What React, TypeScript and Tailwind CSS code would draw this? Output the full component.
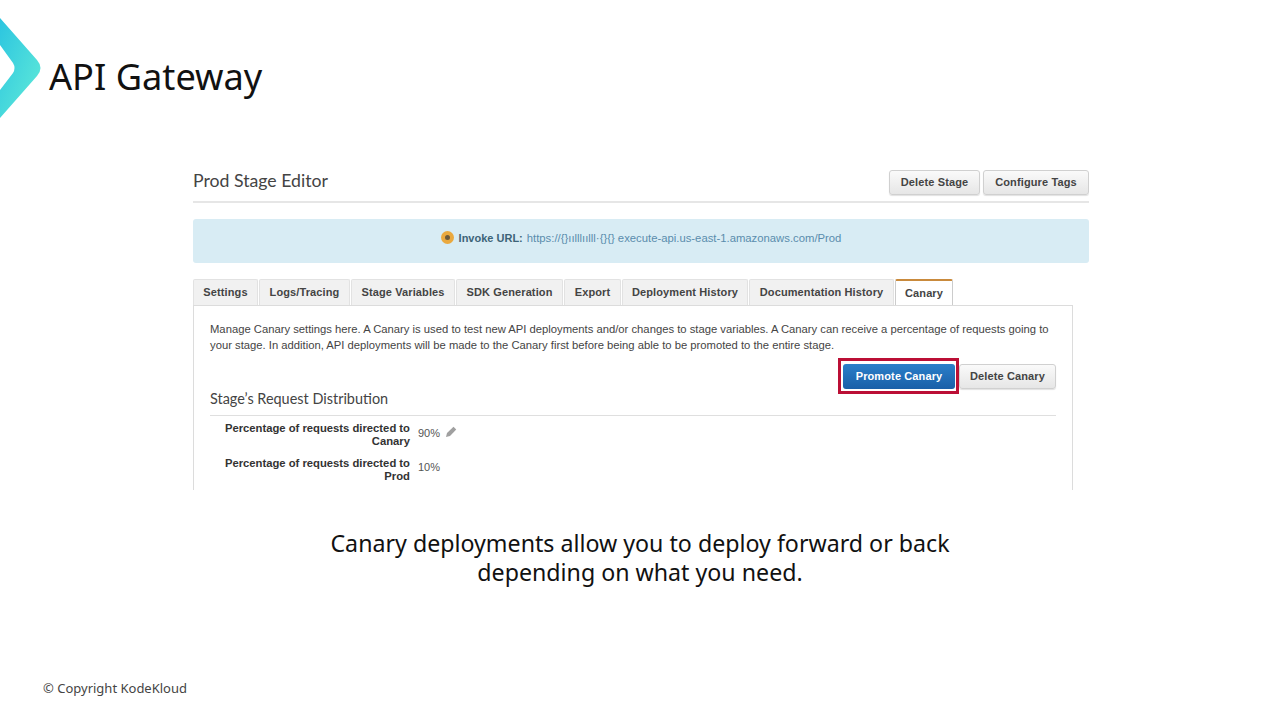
import React from "react";

const tabs: [string, number][] = [
  ["Settings", 65],
  ["Logs/Tracing", 91],
  ["Stage Variables", 104],
  ["SDK Generation", 107],
  ["Export", 57],
  ["Deployment History", 126],
  ["Documentation History", 145],
];

function GrayButton({ label, width }: { label: string; width: string }) {
  return (
    <div
      className={`${width} h-[25px] flex items-center justify-center rounded-[3px] border border-[#d0d0d0] bg-gradient-to-b from-[#fafafa] to-[#e6e6e6] text-[11px] font-bold tracking-[0.12px] text-[#444] shadow-[0_1px_1px_rgba(0,0,0,0.12)]`}
    >
      {label}
    </div>
  );
}

export default function App() {
  return (
    <div className="relative w-[1280px] h-[720px] bg-white overflow-hidden font-['Liberation_Sans',sans-serif]">
      <div className="flex items-start h-[170px]">
        <svg width="42" height="100" viewBox="0 0 42 100" className="mt-[18px] shrink-0">
          <defs>
            <linearGradient id="g" x1="0" y1="0" x2="1" y2="1">
              <stop offset="0" stopColor="#2cc5e0" />
              <stop offset="1" stopColor="#62ecd8" />
            </linearGradient>
          </defs>
          <path d="M0 0 L37 42 Q44 50 37 58 L0 100 L0 72 L13 55 Q16 50 13 45 L0 27 Z" fill="url(#g)" />
        </svg>
        <h1 className="ml-[7px] mt-[52px] text-[36.2px] leading-[48px] text-[#111] font-['Noto_Sans',sans-serif]">API Gateway</h1>
      </div>

      <div className="ml-[193px] w-[896px] h-[320px] overflow-hidden">
        <div className="flex items-start justify-between h-[33px] border-b-2 border-[#e6e6e6]">
          <div className="text-[17.7px] leading-[22px] text-[#444] font-['Lato',sans-serif]">Prod Stage Editor</div>
          <div className="flex gap-[3px]">
            <GrayButton label="Delete Stage" width="w-[91px]" />
            <GrayButton label="Configure Tags" width="w-[106px]" />
          </div>
        </div>

        <div className="mt-[16px] h-[44px] rounded-[3px] bg-[#d8ecf4] flex items-start justify-center pt-[12px] text-[11px] leading-[14px]">
          <span className="mr-[5px] w-[13px] h-[13px] rounded-full bg-[#eaa93f] flex items-center justify-center">
            <span className="w-[5px] h-[5px] rounded-full bg-[#6b5a3c]" />
          </span>
          <span className="font-bold text-[#3d6478]">Invoke URL:</span>
          <span className="ml-[4px] text-[11.3px] text-[#5a8cad]">https://{"{}"}ıılllıılll·{"{}{}"} execute-api.us-east-1.amazonaws.com/Prod</span>
        </div>

        <div className="mt-[16px] flex items-end gap-[1px] h-[26px]">
          {tabs.map(([t, w]) => (
            <div
              key={t}
              style={{ width: w }}
              className="h-[26px] shrink-0 flex items-center justify-center rounded-t-[2px] border border-b-0 border-[#e2e2e2] bg-[#f1f1f1] text-[11px] font-bold tracking-[0.12px] text-[#444]"
            >
              {t}
            </div>
          ))}
          <div className="w-[58px] h-[26px] shrink-0 flex items-center justify-center rounded-t-[2px] border border-b-0 border-t-2 border-[#ccc] border-t-[#c98a3c] bg-white text-[11px] font-bold tracking-[0.12px] text-[#444]">
            Canary
          </div>
        </div>

        <div className="w-[880px] h-[185px] border-x border-t border-[#dcdcdc] pl-[16px] pr-[16px] pt-[15px]">
          <p className="text-[11.25px] leading-[16px] text-[#444] whitespace-nowrap">
            Manage Canary settings here. A Canary is used to test new API deployments and/or changes to stage variables. A Canary can receive a percentage of requests going to
            <br />
            your stage. In addition, API deployments will be made to the Canary first before being able to be promoted to the entire stage.
          </p>
          <div className="flex justify-end items-center gap-[4px] mt-[11px] h-[25px]">
            <div className="relative w-[112px] h-[25px] flex items-center justify-center rounded-[3px] bg-gradient-to-b from-[#2a7fc9] to-[#1a5fa8] text-[11px] font-bold tracking-[0.12px] text-white">
              Promote Canary
              <div className="absolute -left-[5px] -top-[6px] -right-[4px] -bottom-[5px] border-[3px] border-[#bb0f35]" />
            </div>
            <GrayButton label="Delete Canary" width="w-[97px]" />
          </div>
          <div className="-mt-[3px] h-[30px] border-b border-[#dfdfdf] text-[14.45px] leading-[26px] text-[#444] font-['Lato',sans-serif]">
            Stage’s Request Distribution
          </div>
          <div className="mt-[6px] flex items-start">
            <div className="w-[200px] text-right text-[11.25px] leading-[13px] font-bold text-[#333]">Percentage of requests directed to Canary</div>
            <div className="ml-[8px] mt-[5px] text-[11px] leading-[13px] text-[#555]">90%</div>
            <svg width="12" height="12" viewBox="0 0 24 24" className="ml-[5px] mt-[4px]" fill="#a0a0a0">
              <path d="M2 22l2-8L17 1.5l5.5 5.5L10 20z" />
            </svg>
          </div>
          <div className="mt-[9px] flex items-start">
            <div className="w-[200px] text-right text-[11.25px] leading-[13px] font-bold text-[#333]">Percentage of requests directed to Prod</div>
            <div className="ml-[8px] mt-[4px] text-[11px] leading-[13px] text-[#555]">10%</div>
          </div>
        </div>
      </div>

      <div className="mt-[39px] text-center text-[23.2px] leading-[29px] text-[#111] font-['Noto_Sans',sans-serif]">
        Canary deployments allow you to deploy forward or back
        <br />
        depending on what you need.
      </div>

      <div className="absolute left-[43px] top-[679px] text-[13px] leading-[18px] text-[#444] font-['Noto_Sans',sans-serif]">© Copyright KodeKloud</div>
    </div>
  );
}
